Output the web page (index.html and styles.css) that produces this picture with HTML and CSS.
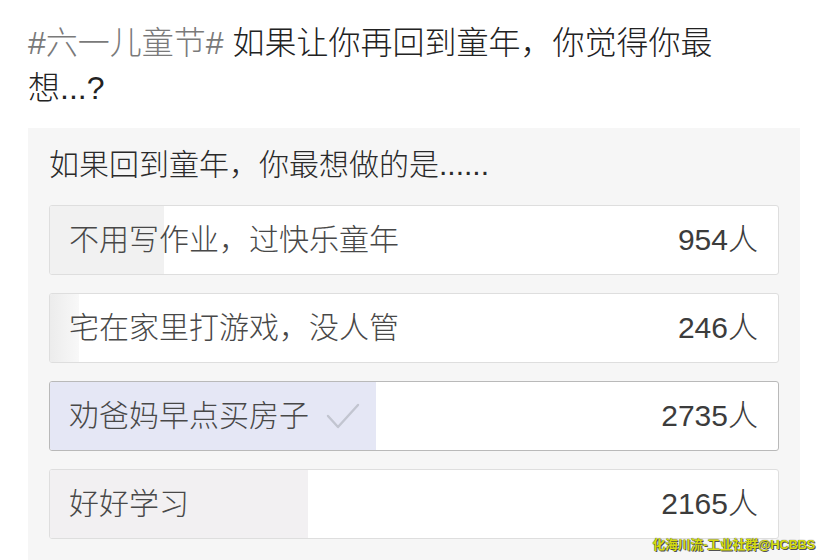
FILE: index.html
```html
<!DOCTYPE html>
<html lang="zh-CN">
<head>
<meta charset="utf-8">
<link rel="stylesheet" href="styles.css">
</head>
<body>
<div class="page">
  <h1 class="title"><span class="tag">#六一儿童节#</span><span class="headline">如果让你再回到童年，你觉得你最想...?</span></h1>
  <section class="poll">
    <h2 class="question">如果回到童年，你最想做的是......</h2>
    <ul class="options">
      <li class="option">
        <div class="fill" style="width:15.6%"></div>
        <span class="label">不用写作业，过快乐童年</span>
        <span class="count">954人</span>
      </li>
      <li class="option">
        <div class="fill fill-faint" style="width:4%"></div>
        <span class="label">宅在家里打游戏，没人管</span>
        <span class="count">246人</span>
      </li>
      <li class="option selected">
        <div class="fill" style="width:44.8%"></div>
        <span class="label">劝爸妈早点买房子
          <svg class="check" width="36" height="30" viewBox="0 0 36 30"><path d="M3 14 L13 25 L33 3" fill="none" stroke="#c2c5d0" stroke-width="2.4" stroke-linecap="round" stroke-linejoin="round"/></svg>
        </span>
        <span class="count">2735人</span>
      </li>
      <li class="option">
        <div class="fill fill-pink" style="width:35.5%"></div>
        <span class="label">好好学习</span>
        <span class="count">2165人</span>
      </li>
    </ul>
  </section>
  <div class="watermark">化海川流-工业社群@HCBBS</div>
</div>
</body>
</html>
```

FILE: styles.css
```css
html, body {
  margin: 0;
  padding: 0;
  background: #ffffff;
}
body {
  font-family: "Liberation Sans", "Noto Sans CJK SC", sans-serif;
  width: 824px;
  height: 560px;
  overflow: hidden;
}
.page {
  position: relative;
  height: 560px;
}
.title {
  margin: 0;
  padding: 21px 90px 0 28px;
  font-size: 32px;
  font-weight: 300;
  line-height: 45px;
  color: #222222;
  height: 107px;
}
.tag {
  color: #7a7a7a;
  margin-right: 9px;
}
.poll {
  margin: 0 24px 0 28px;
  background: #f6f6f6;
  padding: 17px 21px 24px 21px;
  height: 432px;
  box-sizing: border-box;
}
.question {
  margin: 0 0 20px 0;
  font-size: 30px;
  font-weight: 300;
  line-height: 40px;
  color: #2a2a2a;
}
.options {
  list-style: none;
  margin: 0;
  padding: 0;
  display: flex;
  flex-direction: column;
  gap: 18px;
}
.option {
  position: relative;
  height: 70px;
  box-sizing: border-box;
  border: 1px solid #dedede;
  border-radius: 3px;
  background: #ffffff;
  display: flex;
  align-items: center;
  justify-content: space-between;
  padding: 0 20px 0 19px;
  overflow: hidden;
}
.option.selected {
  border-color: #b9b9b9;
}
.fill {
  position: absolute;
  left: 0;
  top: 0;
  bottom: 0;
  background: #f1f1f1;
}
.fill-faint {
  background: linear-gradient(to right, #ececec, #f8f8f8);
}
.selected .fill {
  background: #e5e7f5;
}
.fill-pink {
  background: #f2f0f2;
}
.label, .count {
  position: relative;
  font-size: 30px;
  font-weight: 300;
  line-height: 40px;
  color: #484848;
}
.label {
  display: flex;
  align-items: center;
  gap: 16px;
}
.count {
  color: #3c3c3c;
}
.check {
  display: block;
  margin-top: 2px;
}
.watermark {
  position: absolute;
  right: 9px;
  bottom: 7px;
  font-size: 13px;
  font-weight: bold;
  line-height: 16px;
  color: #d4dc10;
  text-shadow: 0 0 1px #333, 1px 1px 0 #555;
  letter-spacing: -0.3px;
}
```
